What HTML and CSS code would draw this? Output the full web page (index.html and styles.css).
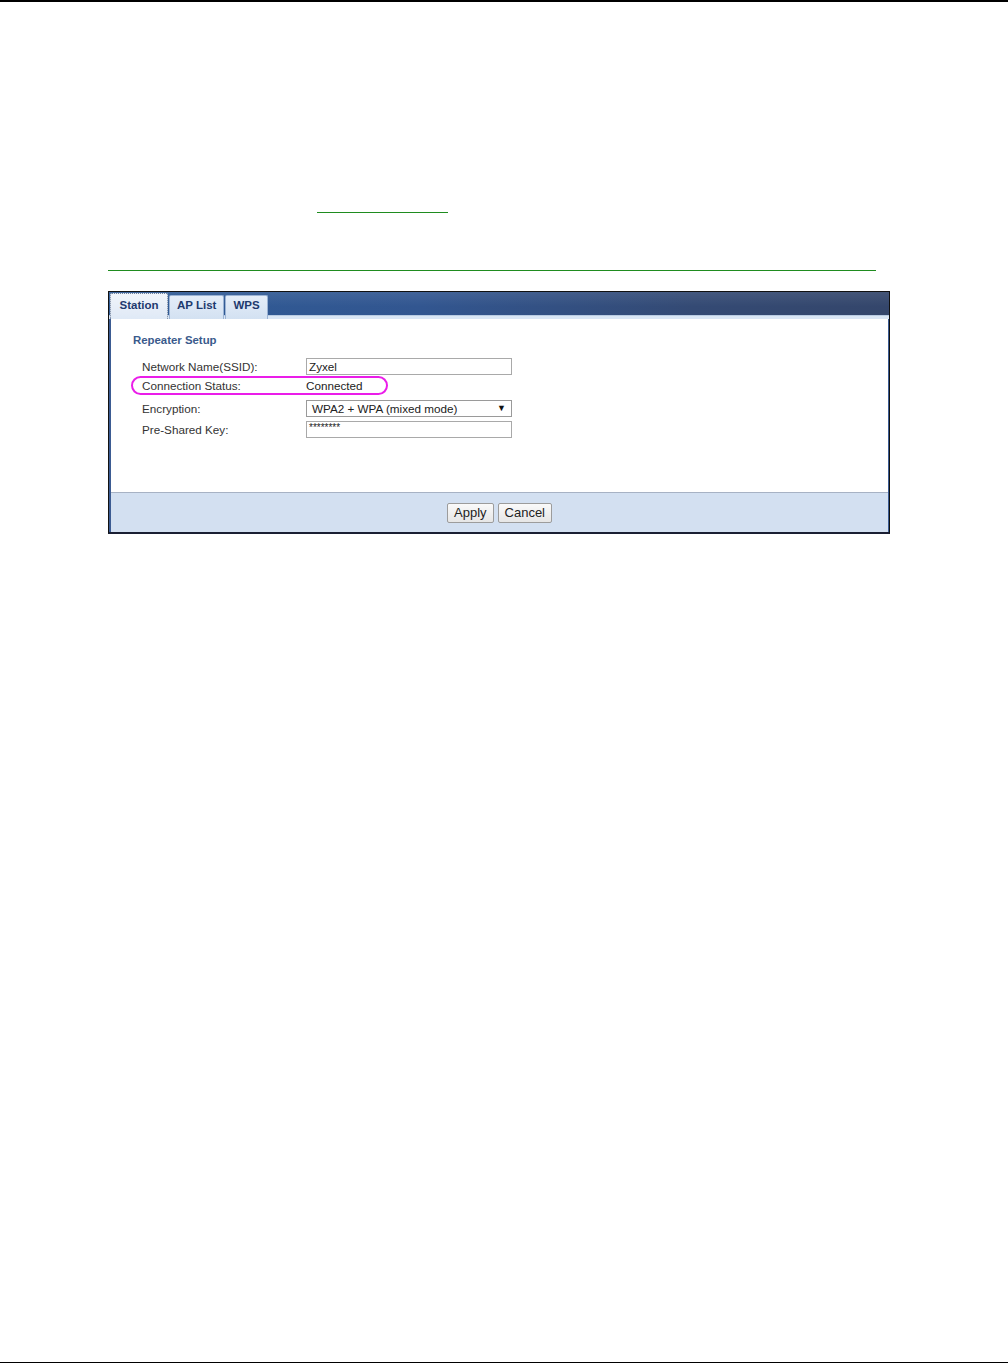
FILE: index.html
```html
<!DOCTYPE html>
<html lang="en">
<head>
    <meta charset="UTF-8">
    <title>Repeater Setup - Station</title>
    <link rel="stylesheet" href="styles.css">
</head>
<body>
    <div class="page">
        <div class="link-line"></div>
        <div class="rule"></div>

        <div class="panel">
            <div class="tab-bar">
                <div class="tab tab-active">Station</div>
                <div class="tab">AP List</div>
                <div class="tab">WPS</div>
            </div>

            <div class="panel-body">
                <h2 class="section-title">Repeater Setup</h2>
                <div class="form-grid">
                    <div class="label">Network Name(SSID):</div>
                    <div class="field">Zyxel</div>

                    <div class="label">Connection Status:</div>
                    <div class="value">Connected</div>

                    <div class="label">Encryption:</div>
                    <div class="field select">
                        <span>WPA2 + WPA (mixed mode)</span>
                        <span class="arrow">▼</span>
                    </div>

                    <div class="label">Pre-Shared Key:</div>
                    <div class="field password">********</div>
                </div>
            </div>

            <div class="panel-footer">
                <button class="btn">Apply</button>
                <button class="btn">Cancel</button>
            </div>

            <!-- callout round the status row -->
            <div class="highlight"></div>
        </div>
    </div>
</body>
</html>
```

FILE: styles.css
```css
* {
    margin: 0;
    padding: 0;
    box-sizing: border-box;
}

body {
    font-family: "Liberation Sans", Arial, sans-serif;
    background: #ffffff;
    color: #333333;
}

.page {
    height: 1363px;
    border-top: 2px solid #000000;
    border-bottom: 1px solid #000000;
    padding-top: 210px;
}

.link-line {
    margin-left: 317px;
    width: 131px;
    border-top: 1px solid #1f8c1f;
}

.rule {
    margin-top: 57px;
    margin-left: 108px;
    width: 768px;
    border-top: 1px solid #1f8c1f;
}

.panel {
    position: relative;
    margin-top: 20px;
    margin-left: 108px;
    width: 782px;
    border: 1px solid #111111;
    border-bottom: 2px solid #1a1f33;
    background: #3b5b92;
}

.tab-bar {
    display: flex;
    gap: 1px;
    height: 27px;
    padding: 1px 0 0 1px;
    background: linear-gradient(180deg, rgba(255, 255, 255, 0.08) 0%, rgba(255, 255, 255, 0) 60%),
                linear-gradient(90deg, #2f5b96 0%, #325690 40%, #344a74 75%, #34466b 100%);
    border-bottom: 3px solid #d9e6f5;
    box-shadow: inset 0 -1px 0 #b9cce3;
    align-items: flex-end;
}

.tab {
    height: 24px;
    padding: 0 7px 6px;
    font-size: 11.5px;
    font-weight: bold;
    color: #1e3a6e;
    background: linear-gradient(180deg, #e4edf8 0%, #d3e1f2 100%);
    border: 1px solid #9bb3d4;
    border-bottom: none;
    border-radius: 2px 2px 0 0;
    display: flex;
    align-items: center;
    margin-bottom: -3px;
}

.tab-active {
    width: 58px;
    justify-content: center;
    background: linear-gradient(180deg, #f0f4fa 0%, #dfe9f6 100%);
    border: 1px dotted #6f7f99;
    border-bottom: none;
    height: 26px;
    padding-bottom: 4px;
}

.panel-body {
    height: 173px;
    margin-left: 2px;
    margin-right: 1px;
    background: #ffffff;
    padding: 15px 0 0 22px;
}

.section-title {
    font-size: 11.4px;
    font-weight: bold;
    color: #3a5a8c;
    line-height: 13px;
    margin-bottom: 10px;
}

.form-grid {
    display: grid;
    grid-template-columns: 164px 206px;
    grid-template-rows: 18px 20px 26px 17px;
    align-items: center;
    padding-left: 9px;
    font-size: 11.7px;
}

.label {
    color: #333333;
}

.value {
    color: #222222;
}

.field {
    height: 17px;
    border: 1px solid #a9a9a9;
    background: #ffffff;
    color: #222222;
    padding-left: 2px;
    line-height: 15px;
}

.select {
    display: flex;
    justify-content: space-between;
    padding: 0 5px;
    border-color: #9a9a9a;
}

.arrow {
    font-size: 9px;
    color: #111111;
}

.password {
    font-size: 10px;
    line-height: 12px;
}

.panel-footer {
    height: 40px;
    margin-left: 2px;
    margin-right: 1px;
    background: #d3e0f1;
    border-top: 1px solid #a7b2c4;
    display: flex;
    justify-content: center;
    align-items: center;
    gap: 4px;
}

.btn {
    height: 20px;
    padding: 0 6px;
    font-family: "Liberation Sans", Arial, sans-serif;
    font-size: 13px;
    color: #222222;
    background: linear-gradient(180deg, #fafafa 0%, #e6e6e6 100%);
    border: 1px solid #9c9c9c;
    border-radius: 2px;
}

.highlight {
    position: absolute;
    left: 22px;
    top: 84px;
    width: 257px;
    height: 19px;
    border: 2px solid #ea1de9;
    border-radius: 10px;
}
```
